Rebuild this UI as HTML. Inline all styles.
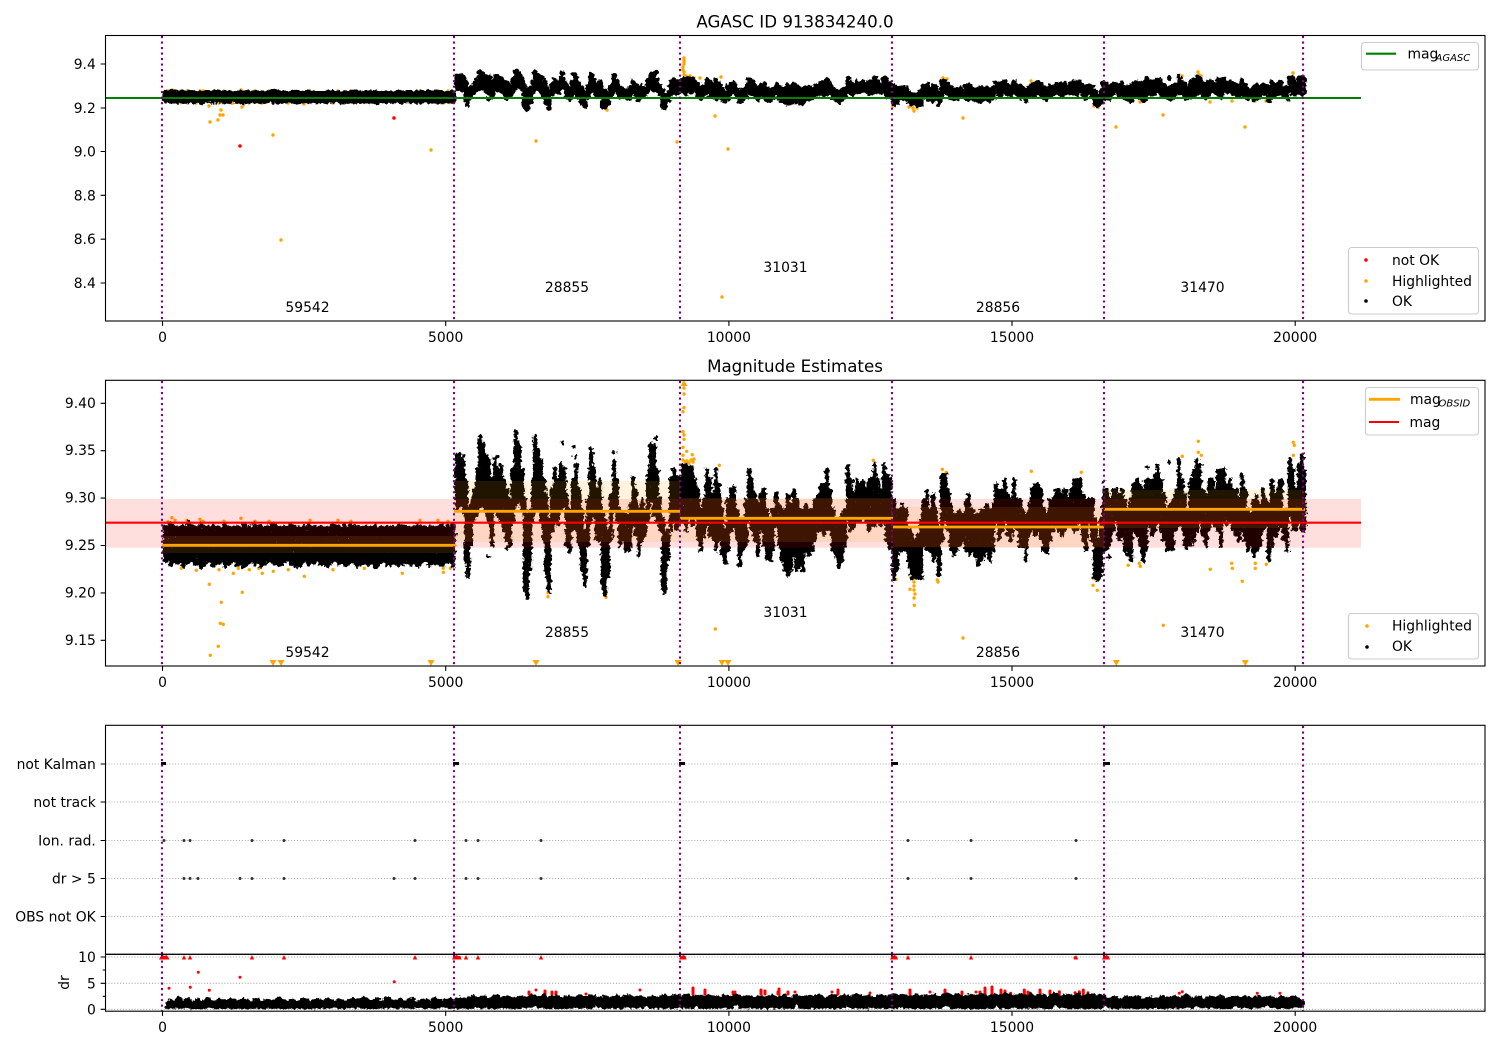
<!DOCTYPE html>
<html><head><meta charset="utf-8"><title>AGASC ID 913834240.0</title>
<style>
html,body{margin:0;padding:0;background:#fff}
svg{display:block}
text{font-family:"DejaVu Sans","Liberation Sans",sans-serif;font-size:13.89px;fill:#000}
.r{text-anchor:end}.m{text-anchor:middle}
.sub{font-size:10px;font-style:italic}
.t{font-size:16.67px;text-anchor:middle}
.frame{fill:none;stroke:#000;stroke-width:1.1}
.tick{stroke:#000;stroke-width:1.1;fill:none}
.grid{stroke:#b0b0b0;stroke-width:1.1;stroke-dasharray:1.1 1.8;fill:none}
.v{stroke:#800080;stroke-width:2.1;stroke-dasharray:2.08 3.43;fill:none}
.dat{fill:none;stroke:#000;stroke-linecap:round;vector-effect:non-scaling-stroke}
.o{fill:none;stroke:#ffa500;stroke-linecap:round;stroke-width:3.4}
.leg{fill:#fff;fill-opacity:.8;stroke:#ccc;stroke-width:1.1}
</style></head><body>
<svg width="1500" height="1050" viewBox="0 0 1500 1050" xmlns="http://www.w3.org/2000/svg">
<defs>
<filter id="rough" filterUnits="userSpaceOnUse" x="100" y="375" width="1400" height="300" color-interpolation-filters="sRGB">
<feTurbulence type="fractalNoise" baseFrequency=".3" numOctaves="2" seed="4" result="n"/>
<feDisplacementMap in="SourceGraphic" in2="n" scale="6" xChannelSelector="R" yChannelSelector="G" result="dis"/>
<feTurbulence type="fractalNoise" baseFrequency=".6" numOctaves="1" seed="9" result="s"/>
<feColorMatrix in="s" type="matrix" values="0 0 0 0 0 0 0 0 0 0 0 0 0 0 0 -9 0 0 0 7.8" result="mask"/>
<feComposite in="dis" in2="mask" operator="in"/>
</filter>
<filter id="rough1" filterUnits="userSpaceOnUse" x="100" y="30" width="1400" height="300" color-interpolation-filters="sRGB">
<feTurbulence type="fractalNoise" baseFrequency=".25" numOctaves="2" seed="7" result="n"/>
<feDisplacementMap in="SourceGraphic" in2="n" scale="5" xChannelSelector="R" yChannelSelector="G"/>
</filter>
<filter id="rough4" filterUnits="userSpaceOnUse" x="100" y="955" width="1400" height="60" color-interpolation-filters="sRGB">
<feTurbulence type="fractalNoise" baseFrequency=".3" numOctaves="2" seed="3" result="n"/>
<feDisplacementMap in="SourceGraphic" in2="n" scale="5" xChannelSelector="R" yChannelSelector="G"/>
</filter>
<path id="d" class="dat" d="M165 526V562M171 524V565M177 527V563M183 526V566M189 523V562M195 528V564M201 525V567M207 528V561M213 526V565M219 530V563M225 524V566M231 528V562M237 527V565M243 525V567M249 529V562M255 524V564M261 527V566M267 526V561M273 523V563M279 528V566M285 527V562M291 525V564M297 529V567M303 526V562M309 525V565M315 528V562M321 527V564M327 530V566M333 524V561M339 527V564M345 526V565M351 524V562M357 529V566M363 527V563M369 528V564M375 526V567M381 529V562M387 527V565M393 528V563M399 525V566M405 527V562M411 529V564M417 524V566M423 528V561M429 526V565M435 527V563M441 525V566M447 527V562M453 524V565
M168 529V560M174 527V563M180 530V561M186 528V564M192 526V560M198 531V563M204 527V565M210 530V560M216 528V563M222 531V561M228 527V564M234 530V560M240 529V564M246 527V565M252 531V561M258 527V562M264 529V564M270 528V560M276 526V562M282 530V564M288 529V560M294 527V563M300 531V565M306 528V561M312 527V563M318 530V561M324 529V562M330 531V564M336 527V560M342 529V563M348 528V564M354 527V561M360 531V564M366 529V562M372 530V563M378 528V565M384 531V561M390 529V564M396 530V562M402 527V564M408 529V561M414 531V563M420 527V564M426 530V560M432 528V563M438 529V562M444 527V564M450 529V561M165 528H454M165 534H454M165 540H454M165 546H454M165 552H454M165 558H454
M457 455V510M460 453V505M463 458V512M466 480V560M468 510V577M471 505V545M474 490V520M477 470V515M480 436V505M483 445V505M486 455V515M489 460V525M492 480V545M495 458V510M498 470V515M501 465V520M504 480V530M507 490V540M510 500V545M513 470V520M516 432V505M519 445V500M522 470V510M525 500V590M527 515V598M530 510V570M533 480V520M535 436V510M538 450V510M541 460V520M544 480V540M546 495V575M549 520V592M552 490V530M555 470V520M558 480V525M561 465V510M564 470V505M567 495V545M570 510V552M573 480V530M576 465V530M579 490V545M582 510V570M585 530V585M588 500V545M591 450V520M594 470V515M597 490V540M600 480V540M603 515V590M605 520V595M608 530V575M611 495V540M614 462V510M617 480V520M620 510V545M623 513V540M626 515V550M630 505V550M633 478V525M636 490V535M639 510V555M642 500V540M645 510V535M648 475V520M651 445V500M654 445V515M657 470V520M660 500V530M663 520V590M665 535V592M668 530V560M671 480V530M674 470V520M677 478V530M680 478V520
M683 465V520M686 465V530M689 467V515M692 467V525M695 480V515M698 490V540M701 510V550M704 500V535M707 470V525M710 480V535M713 495V540M716 470V550M719 485V540M722 510V555M725 530V563M728 500V550M731 490V530M734 487V525M737 510V540M740 520V565M743 520V550M746 500V545M749 470V520M752 480V530M755 495V540M758 505V555M761 495V530M764 490V545M767 510V560M770 520V560M773 510V550M776 495V525M779 505V545M782 510V560M785 510V570M788 495V575M791 505V570M794 490V555M797 500V570M800 510V565M803 510V570M806 505V550M809 510V555M812 510V550M815 500V540M818 495V530M821 485V530M824 485V535M827 470V530M830 490V530M833 510V550M836 520V555M839 520V567M842 515V560M845 510V545M848 465V520M851 480V530M854 495V525M857 480V520M860 485V520M863 480V515M866 490V520M869 480V530M872 478V525M875 465V525M878 480V520M881 490V525M884 465V520M887 475V540M890 480V548
M894 500V580M897 510V570M900 510V550M903 505V550M906 510V550M909 530V565M912 535V578M915 540V578M918 535V578M921 520V578M924 500V545M927 492V550M930 510V550M933 495V560M936 510V555M939 530V575M942 475V540M945 475V520M948 490V530M951 505V550M954 515V555M957 515V550M960 510V545M963 515V540M966 500V550M969 495V555M972 510V550M975 515V555M978 515V565M981 510V560M984 510V555M987 505V550M990 510V560M993 505V550M996 485V520M999 490V540M1002 490V530M1005 480V520M1008 495V535M1011 500V540M1014 480V525M1017 500V530M1020 500V545M1023 510V545M1026 515V560M1029 505V535M1032 490V530M1035 485V535M1038 485V530M1041 490V540M1044 510V550M1047 515V552M1050 500V540M1053 500V530M1056 490V525M1059 490V530M1062 495V535M1065 490V530M1068 500V525M1071 490V525M1074 480V530M1077 480V530M1080 480V520M1083 495V540M1086 500V550M1089 500V520M1092 500V540M1095 520V578M1098 540V580M1101 520V575
M1104 490V550M1107 490V550M1110 500V545M1113 490V530M1116 490V520M1119 495V540M1122 490V535M1125 500V550M1128 510V555M1131 500V560M1134 485V530M1137 480V535M1140 485V545M1143 490V560M1146 480V550M1149 480V525M1152 480V535M1155 475V530M1158 470V520M1161 480V530M1164 495V540M1167 510V550M1170 505V550M1173 500V548M1176 490V530M1179 460V525M1182 480V530M1185 495V545M1188 510V545M1191 480V545M1194 470V540M1197 460V530M1200 470V520M1203 490V535M1206 495V545M1209 480V530M1212 480V520M1215 490V525M1218 470V530M1221 470V545M1224 470V520M1227 485V525M1230 480V520M1233 490V530M1236 490V535M1239 500V540M1242 475V530M1245 490V540M1248 510V550M1251 515V545M1254 500V555M1257 495V550M1260 505V545M1263 490V530M1266 500V525M1269 505V560M1272 480V545M1275 495V535M1278 490V530M1281 480V525M1284 510V540M1287 510V550M1290 460V515M1293 470V530M1296 490V530M1299 465V520M1302 455V530M1304 470V530
M488 556h0M507 548h0M562 443h0M574 447h0M575 457h0M592 453h0M497 457h0M656 438h0M614 452h0M777 493h0M792 496h0M1147 467h0M1157 466h0M1169 462h0M1109 557h0M1187 548h0M1103 482h0M1200 465h0"/>
</defs>

<!-- ========== Panel 1 ========== -->
<text class="t" x="795" y="27.5">AGASC ID 913834240.0</text>
<path class="o" d="M168 91h0M172 90h0M175 91h0M187 91h0M200 91h0M203 91h0M224 91h0M241 90h0M255 91h0M269 91h0M310 91h0M338 91h0M351 91h0M420 91h0M438 91h0M448 91h0M181 102.5h0M196 103h0M219 103h0M233 103h0M238 102.5h0M249 103h0M259 102.5h0M262 103h0M273 103h0M288 103h0M304 104h0M333 103h0M364 102.5h0M402 103h0M443 103h0M450 102.5h0M209 106h0M210 122h0M218 120h0M221 110h0M220 115h0M223 115h0M242 107h0M273 135h0M431 150h0M281 240h0M536 141h0M677 142h0M715 116h0M728 149h0M722 297h0M527 108h0M548 109h0M607 110h0M684 58h0M684 60h0M684 62h0M684 64h0M683 67h0M683 70h0M684 72h0M684 75h0M686 76h0M690 76h0M694 78h0M700 78h0M721 77h0M893 106h0M909 107h0M913 108h0M914 111h0M917 108h0M943 78h0M947 79h0M938 105h0M963 118h0M1031 81h0M1094 106h0M1098 107h0M1116 127h0M1129 101h0M1140 102h0M1163 115h0M1182 76h0M1198 72h0M1199 75h0M1201 76h0M1210 102h0M1232 101h0M1245 127h0M1255 101h0M1266 101h0M1293 73h0"/>
<circle cx="240" cy="146" r="1.8" fill="#f00"/><circle cx="394" cy="118" r="1.8" fill="#f00"/>
<g filter="url(#rough1)" style="stroke-width:5.2"><use href="#d" transform="matrix(1 0 0 .23 0 -28.4)"/></g>
<path stroke="#008000" stroke-width="2.1" d="M105.5 98H1361" fill="none"/>
<path class="v" d="M162 36V321M454 36V321M680 36V321M892 36V321M1104 36V321M1303 36V321"/>
<rect class="frame" x="105.5" y="35.5" width="1379.5" height="285.5"/>
<path class="tick" d="M100.6 64h4.9M100.6 108h4.9M100.6 151.5h4.9M100.6 195.3h4.9M100.6 239.2h4.9M100.6 283h4.9M162.5 321v4.9M445.7 321v4.9M728.9 321v4.9M1012 321v4.9M1295.2 321v4.9"/>
<text class="r" x="95.8" y="69">9.4</text><text class="r" x="95.8" y="113">9.2</text><text class="r" x="95.8" y="156.5">9.0</text><text class="r" x="95.8" y="200.3">8.8</text><text class="r" x="95.8" y="244.2">8.6</text><text class="r" x="95.8" y="288">8.4</text>
<text class="m" x="162.5" y="342">0</text><text class="m" x="445.7" y="342">5000</text><text class="m" x="728.9" y="342">10000</text><text class="m" x="1012" y="342">15000</text><text class="m" x="1295.2" y="342">20000</text>
<text class="m" x="307.5" y="312">59542</text><text class="m" x="567" y="292">28855</text><text class="m" x="785.5" y="272">31031</text><text class="m" x="998" y="312">28856</text><text class="m" x="1202.5" y="292">31470</text>
<rect class="leg" x="1361.5" y="42.5" width="117" height="27.5" rx="3"/>
<path d="M1366 53.7h30" stroke="#008000" stroke-width="2.1"/>
<text x="1407.5" y="58.5">mag</text><text class="sub" x="1435.5" y="61">AGASC</text>
<rect class="leg" x="1348.5" y="247.5" width="130" height="66.5" rx="3"/>
<circle cx="1366" cy="260" r="1.8" fill="#f00"/><circle cx="1366" cy="281" r="1.8" fill="#ffa500"/><circle cx="1366" cy="301" r="1.8" fill="#000"/>
<text x="1392" y="265">not OK</text><text x="1392" y="286">Highlighted</text><text x="1392" y="306">OK</text>

<!-- ========== Panel 2 ========== -->
<text class="t" x="795" y="372">Magnitude Estimates</text>
<path class="o" d="M168 521.7h0M172 517.7h0M175 520.3h0M187 520.3h0M200 519.3h0M203 521.3h0M224 521.3h0M241 518.3h0M255 521.3h0M269 521.3h0M310 520.3h0M338 520.3h0M351 521.3h0M420 520.3h0M438 520.3h0M448 521.3h0M181.3 568.3h0M196.3 570.3h0M219 569.7h0M233.3 573.3h0M238.3 568.3h0M249.3 569.7h0M258.7 568.3h0M262.3 573.3h0M273.3 571.3h0M288.3 569.7h0M304.3 576.3h0M333 569.7h0M364.3 568.3h0M402.3 573.3h0M443.3 568.3h0M443.3 572.3h0M450.3 568.3h0M209.3 584.3h0M242.3 592.3h0M221.3 602.3h0M220.3 623.3h0M223.3 624.3h0M218.3 646.3h0M210.3 655.3h0M527 595.7h0M528 597.7h0M548 592.7h0M548 596.7h0
M684 388h0M684 394h0M684 407.7h0M683 411.7h0M683 431.7h0M684 435h0M684 439.3h0M683 447.3h0M686.7 451.3h0M692.3 454.7h0M683 455.3h0M683 460h0M685 462h0M687 461h0M689 463h0M691 460h0M693 462h0M694 459h0M719.3 465.3h0M873.3 460.3h0M942.3 469.3h0M946.3 472.3h0M1031.3 471.3h0M1081.3 472.3h0M896 579.3h0M910 589.3h0M914.3 605.3h0M911 578h0M914 578h0M917 578h0M920 577h0M914 582h0M914 586h0M914 590h0M915 594h0M914 598h0M937.3 580h0M938 582h0M1095 579h0M1093 585.3h0M1097.3 590.3h0M606 597.3h0M606 593.3h0M715.3 629h0M963 638h0M1182.3 456.3h0M1198.3 441.3h0M1198.3 452.3h0M1201.3 455.3h0M1293.3 442.3h0M1294.3 445.3h0M1293.3 455.3h0M1128.3 565.3h0M1139.3 563.3h0M1140.3 566.3h0M1210.3 569.3h0M1231.7 563.3h0M1232.3 568.3h0M1242.3 581.3h0M1255.3 563.3h0M1255.3 568.3h0M1266.3 564.3h0M1163.3 625.3h0"/>
<path fill="#ffa500" d="M269.5 660h7l-3.5 6zM277.5 660h7l-3.5 6zM427.5 660h7l-3.5 6zM532.5 660h7l-3.5 6zM674.5 660h7l-3.5 6zM718.5 660h7l-3.5 6zM724.5 660h7l-3.5 6zM1112.8 660h7l-3.5 6zM1241.8 660h7l-3.5 6zM680.5 386h7l-3.5-6z"/>
<g filter="url(#rough)" style="stroke-width:4.2"><use href="#d"/></g>
<rect x="105.5" y="499" width="1255.5" height="48.7" fill="#f00" fill-opacity=".13"/>
<g fill="#ffa500" fill-opacity=".13">
<rect x="162" y="536" width="294" height="17"/><rect x="454" y="481" width="226" height="61"/><rect x="680" y="498" width="213" height="44"/><rect x="893" y="507" width="211" height="40"/><rect x="1104" y="490" width="201" height="38"/>
</g>
<path stroke="#ffa500" stroke-width="2.8" fill="none" d="M162 545.3H456M454 511.3H680M680 518.3H893M893 527H1104M1104 509.3H1305"/>
<path stroke="#f00" stroke-width="2.1" fill="none" d="M105.5 522.7H1361"/>
<path class="v" d="M162 381V666M454 381V666M680 381V666M892 381V666M1104 381V666M1303 381V666"/>
<rect class="frame" x="105.5" y="380.3" width="1379.5" height="285.7"/>
<path class="tick" d="M100.6 403.3h4.9M100.6 450.7h4.9M100.6 498.1h4.9M100.6 545.5h4.9M100.6 592.9h4.9M100.6 640.3h4.9M162.5 666v4.9M445.7 666v4.9M728.9 666v4.9M1012 666v4.9M1295.2 666v4.9"/>
<text class="r" x="95.8" y="407.8">9.40</text><text class="r" x="95.8" y="455.2">9.35</text><text class="r" x="95.8" y="502.6">9.30</text><text class="r" x="95.8" y="550">9.25</text><text class="r" x="95.8" y="597.4">9.20</text><text class="r" x="95.8" y="644.8">9.15</text>
<text class="m" x="162.5" y="687">0</text><text class="m" x="445.7" y="687">5000</text><text class="m" x="728.9" y="687">10000</text><text class="m" x="1012" y="687">15000</text><text class="m" x="1295.2" y="687">20000</text>
<text class="m" x="307.5" y="657">59542</text><text class="m" x="567" y="637">28855</text><text class="m" x="785.5" y="617">31031</text><text class="m" x="998" y="657">28856</text><text class="m" x="1202.5" y="637">31470</text>
<rect class="leg" x="1365.5" y="387.5" width="113" height="47.5" rx="3"/>
<path d="M1369 399.3h31" stroke="#ffa500" stroke-width="2.8"/><path d="M1369 422h30" stroke="#f00" stroke-width="2.1"/>
<text x="1410" y="404">mag</text><text class="sub" x="1438.5" y="406.3">OBSID</text><text x="1409.5" y="427">mag</text>
<rect class="leg" x="1348.5" y="613.5" width="130" height="45.5" rx="3"/>
<circle cx="1367" cy="626" r="1.8" fill="#ffa500"/><circle cx="1367" cy="647" r="1.8" fill="#000"/>
<text x="1392" y="630.5">Highlighted</text><text x="1392" y="651">OK</text>

<!-- ========== Panel 3 ========== -->
<path class="grid" d="M105.5 764H1485M105.5 802H1485M105.5 840.5H1485M105.5 878.5H1485M105.5 916.5H1485"/>
<path stroke="#000" stroke-width="3" fill="none" d="M161 763.5h5M453 763.5h6M679 763.5h6M891 763.5h7M1103 763.5h7"/>
<path fill="none" stroke="#333" stroke-width="3" stroke-linecap="round" d="M164 840.5h0M184 840.5h0M190 840.5h0M252 840.5h0M284 840.5h0M415 840.5h0M466 840.5h0M478 840.5h0M541 840.5h0M908 840.5h0M971 840.5h0M1076 840.5h0M184 878.5h0M190 878.5h0M198 878.5h0M240 878.5h0M252 878.5h0M284 878.5h0M394 878.5h0M415 878.5h0M466 878.5h0M478 878.5h0M541 878.5h0M908 878.5h0M971 878.5h0M1076 878.5h0"/>
<path class="v" d="M162 726V954M454 726V954M680 726V954M892 726V954M1104 726V954M1303 726V954"/>
<rect class="frame" x="105.5" y="725.3" width="1379.5" height="229"/>
<path class="tick" d="M100.6 764h4.9M100.6 802h4.9M100.6 840.5h4.9M100.6 878.5h4.9M100.6 916.5h4.9"/>
<text class="r" x="95.8" y="769">not Kalman</text><text class="r" x="95.8" y="807">not track</text><text class="r" x="95.8" y="845.5">Ion. rad.</text><text class="r" x="95.8" y="883.5">dr &gt; 5</text><text class="r" x="95.8" y="921.5">OBS not OK</text>

<!-- ========== Panel 4 ========== -->
<path class="grid" d="M105.5 957H1485M105.5 983.3H1485M105.5 1009.3H1485"/>
<path fill="none" stroke="#f00" stroke-width="3" stroke-linecap="round" d="M169 988.3h0M190.3 987.3h0M198.3 972.3h0M209.3 990.3h0M240 977.3h0M394.3 981.7h0M536 990h0M1075 957.7h0M529 994V992M545 994V991M552 994V992M556 994V992M640 990h0M586 994h0M693 994V988M705 994V990M733 994V992M765 994V991M778 994V992M779 994V989M788 994V992M795 992h0M735 992h0M761 994V990M838 994V990M832 992h0M870 993h0M910 994V990M930 992h0M945 994V990M962 994V992M976 992h0M980 994V992M985 994V988M992 994V987M1001 994V990M1005 994V991M1010.7 993.3h0M1024.3 994V990M1030 993.3h0M1059.3 994V991.7M1075 992.7h0M1079.3 994V991.7M1083.3 994V990M1088 992.7h0M1179.3 993.3h0M1182.3 991.7h0M1257.3 993.3h0M1280 993.3h0M1028 994V992M1040 994V990M1050 994V991"/>
<path fill="#f00" d="M159 959.5l1.5-3 2-1.5 2 1 2-1 2 2.5 1 2zM181.8 959.5l2.2-4.5 2.2 4.5zM187.8 959.5l2.2-4.5 2.2 4.5zM249.8 959.5l2.2-4.5 2.2 4.5zM281.8 959.5l2.2-4.5 2.2 4.5zM412.8 959.5l2.2-4.5 2.2 4.5zM452 959.5l1.5-3 3-1.5 2 1 2 0 1 3.5zM463.8 959.5l2.2-4.5 2.2 4.5zM475.8 959.5l2.2-4.5 2.2 4.5zM538.8 959.5l2.2-4.5 2.2 4.5zM679 959.5l1.5-3 3-1.5 2 1 1 3.5zM890 959.5l1.5-3 3-1.5 2 1 1.5 3.5zM905.8 959.5l2.2-4.5 2.2 4.5zM968.8 959.5l2.2-4.5 2.2 4.5zM1073.8 959.5l2.2-4.5 2.2 4.5zM1102 959.5l1.5-3 3-1.5 2 1 1.5 3.5z"/>
<g filter="url(#rough4)"><path fill="#000" stroke="#000" stroke-width="1.6" stroke-linejoin="round" d="M166 1008V1003L170 1000 174 1002 178 997 182 1001 188 998 192 1002 198 999 202 1001 208 998 214 1002 220 999 226 1001 232 998 238 1001 244 999 250 1002 256 998 262 1001 268 999 274 1001 280 997 286 1001 292 999 298 1002 304 998 310 1001 316 999 322 1001 328 998 334 1001 340 999 346 1002 352 998 358 1000 364 997 370 1001 376 999 382 1001 388 997 394 1001 400 999 406 1001 412 998 418 1002 424 999 430 1001 436 997 442 1001 448 998 454 1000 460 997 466 999 472 996 478 998 484 996 490 998 496 995 502 997 508 996 514 999 520 996 526 998 532 995 538 997 544 995 550 997 556 995 562 998 568 996 574 998 580 995 586 997 592 995 598 998 604 996 610 998 616 995 622 997 628 995 634 997 640 996 646 999 652 996 658 998 664 994 670 997 676 995 682 996 688 995 694 997 700 995 706 996 712 995 718 998 724 995 730 997 736 994 742 997 748 995 754 998 760 996 766 997 772 995 778 997 784 995 790 998 796 995 802 997 808 995 814 997 820 995 826 998 832 995 838 997 844 995 850 997 856 994 862 997 868 995 874 998 880 995 886 997 892 994 898 996 904 994 910 996 916 994 922 997 928 995 934 994 940 997 946 993 952 996 958 994 964 997 970 994 976 996 982 994 988 997 994 994 1000 996 1006 993 1012 996 1018 994 1024 996 1030 993 1036 996 1042 994 1048 997 1054 993 1060 996 1066 994 1072 996 1078 993 1084 996 1090 994 1096 996 1102 995 1108 998 1114 996 1120 999 1126 996 1132 998 1138 996 1144 999 1150 997 1156 999 1162 996 1168 998 1174 996 1180 998 1186 995 1192 998 1198 996 1204 999 1210 996 1216 998 1222 996 1228 999 1234 996 1240 998 1246 996 1252 999 1258 996 1264 998 1270 996 1276 999 1282 996 1288 998 1294 996 1300 999 1304 1001V1006L1300 1008H1270L1266 1005 1262 1008H1240L1236 1005 1232 1008H1200L1196 1005 1192 1008H1160L1156 1006 1152 1008H1110L1106 1005 1100 1008H1060L1056 1004 1052 1008H1000L996 1005 992 1008H950L946 1004 942 1008H905L902 1005 898 1008H850L846 1005 842 1008H800L796 1004 792 1008H740L736 1003 732 1008H700L696 1005 692 1008H650L646 1005 642 1008H600L596 1005 592 1008H540L536 1005 532 1008H480L476 1006 472 1008Z"/></g>
<path class="v" d="M162 955V1011M454 955V1011M680 955V1011M892 955V1011M1104 955V1011M1303 955V1011"/>
<rect class="frame" x="105.5" y="954.3" width="1379.5" height="56.9"/>
<path class="tick" d="M100.6 957h4.9M100.6 983.3h4.9M100.6 1009.3h4.9M102.7 970h2.8M102.7 996.3h2.8M162.5 1011v4.9M445.7 1011v4.9M728.9 1011v4.9M1012 1011v4.9M1295.2 1011v4.9"/>
<text class="r" x="95.8" y="962">10</text><text class="r" x="95.8" y="988.3">5</text><text class="r" x="95.8" y="1014.3">0</text>
<text class="m" transform="translate(69 982.5) rotate(-90)">dr</text>
<text class="m" x="162.5" y="1032">0</text><text class="m" x="445.7" y="1032">5000</text><text class="m" x="728.9" y="1032">10000</text><text class="m" x="1012" y="1032">15000</text><text class="m" x="1295.2" y="1032">20000</text>
</svg>
</body></html>
